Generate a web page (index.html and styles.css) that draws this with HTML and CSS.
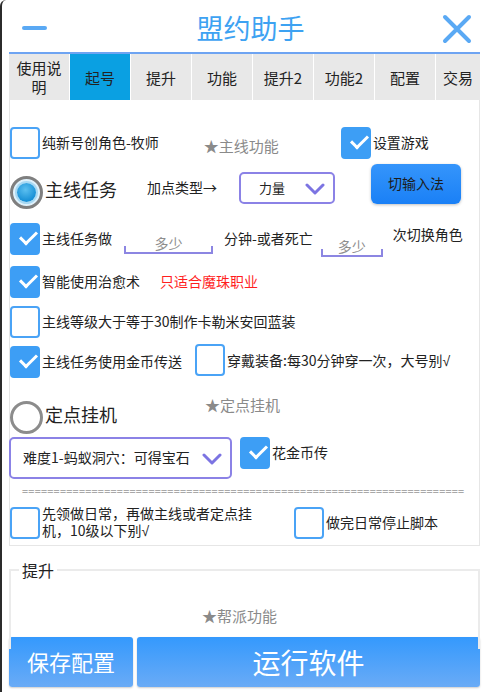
FILE: index.html
```html
<!DOCTYPE html>
<html lang="zh-CN">
<head>
    <meta charset="UTF-8">
    <meta name="viewport" content="width=device-width, initial-scale=1.0">
    <title>盟约助手</title>
    <link rel="stylesheet" href="styles.css">
</head>
<body>

    <div class="app">

        <!-- 标题栏 -->
        <div class="titlebar">
            <span class="btn-min"></span>
            <div class="title">盟约助手</div>
            <svg class="btn-close" width="30" height="30" viewBox="0 0 30 30">
                <path d="M3 3 L27 27 M27 3 L3 27" stroke="#5aa9f4" stroke-width="4" stroke-linecap="round"/>
            </svg>
        </div>

        <!-- 选项卡 -->
        <div class="tabs">
            <div class="tab">使用说<br>明</div>
            <div class="tab active">起号</div>
            <div class="tab">提升</div>
            <div class="tab">功能</div>
            <div class="tab">提升2</div>
            <div class="tab">功能2</div>
            <div class="tab">配置</div>
            <div class="tab last">交易</div>
        </div>

        <div class="panel">

            <div class="row r1">
                <span class="cb"></span>
                <span class="lbl">纯新号创角色-牧师</span>
                <span class="star s1">★主线功能</span>
                <span class="cb on cb-game"></span>
                <span class="lbl">设置游戏</span>
            </div>

            <div class="row r2">
                <span class="radio on"></span>
                <span class="big">主线任务</span>
                <span class="lbl point">加点类型→</span>
                <div class="select sel-small">
                    <span>力量</span>
                    <svg class="chev" width="20" height="12" viewBox="0 0 20 12"><path d="M2 2 L10 10 L18 2" fill="none" stroke="#7c74e2" stroke-width="3" stroke-linecap="round" stroke-linejoin="round"/></svg>
                </div>
                <div class="btn-ime">切输入法</div>
            </div>

            <div class="row r3">
                <span class="cb on"></span>
                <span class="lbl">主线任务做</span>
                <span class="field f1">多少</span>
                <span class="lbl">分钟-或者死亡</span>
                <span class="field f2">多少</span>
                <span class="lbl switch">次切换角色</span>
            </div>

            <div class="row r4">
                <span class="cb on"></span>
                <span class="lbl">智能使用治愈术</span>
                <span class="warn">只适合魔珠职业</span>
            </div>

            <div class="row r5">
                <span class="cb"></span>
                <span class="lbl">主线等级大于等于30制作卡勒米安回蓝装</span>
            </div>

            <div class="row r6">
                <span class="cb on"></span>
                <span class="lbl">主线任务使用金币传送</span>
                <span class="cb cb-wear"></span>
                <span class="lbl">穿戴装备:每30分钟穿一次，大号别<span class="tick">√</span></span>
            </div>

            <div class="row r7">
                <span class="radio"></span>
                <span class="big">定点挂机</span>
                <span class="star s2">★定点挂机</span>
            </div>

            <div class="row r8">
                <div class="select sel-wide">
                    <span>难度1-蚂蚁洞穴：可得宝石</span>
                    <svg class="chev" width="20" height="12" viewBox="0 0 20 12"><path d="M2 2 L10 10 L18 2" fill="none" stroke="#7c74e2" stroke-width="3" stroke-linecap="round" stroke-linejoin="round"/></svg>
                </div>
                <span class="cb on"></span>
                <span class="lbl">花金币传</span>
            </div>

            <div class="sep">======================================================================</div>

            <div class="row r9">
                <span class="cb"></span>
                <span class="lbl two">先领做日常，再做主线或者定点挂机，10级以下别<span class="tick">√</span></span>
                <span class="cb cb-stop"></span>
                <span class="lbl">做完日常停止脚本</span>
            </div>

        </div>

        <!-- 提升分组 -->
        <div class="group">
            <span class="legend">提升</span>
            <div class="star s3">★帮派功能</div>
        </div>

        <!-- 底部按钮 -->
        <div class="bottom">
            <div class="btn-save">保存配置</div>
            <div class="btn-run">运行软件</div>
        </div>

    </div>

</body>
</html>
```

FILE: styles.css
```css
body {
    margin: 0;
    padding: 0;
    background: #fff;
    font-family: "Noto Sans CJK SC", "Noto Sans", sans-serif;
    line-height: 1.25;
    color: #222;
}
.app {
    width: 483px;
    height: 692px;
    overflow: hidden;
    border-left: 2px solid #2b2b2b;
    border-top-left-radius: 6px;
    padding: 0 3px 0 7px;
    box-sizing: border-box;
    position: relative;
}

/* 标题栏 */
.titlebar {
    height: 52px;
    display: flex;
    align-items: center;
    position: relative;
}
.btn-min {
    width: 25px;
    height: 4px;
    background: #5aa9f4;
    border-radius: 2px;
    margin-left: 13px;
    margin-top: 4px;
}
.title {
    flex: 1;
    text-align: center;
    font-size: 27px;
    color: #3da2f2;
    margin-left: 12px;
    margin-top: 4px;
}
.btn-close {
    margin-right: 8px;
    margin-top: 5px;
}

/* 选项卡 */
.tabs {
    display: flex;
    gap: 1px;
    border-top: 2px solid #6ea4f2;
    height: 46px;
}
.tab {
    width: 60px;
    background: #e8e8e8;
    font-size: 15px;
    line-height: 19px;
    display: flex;
    align-items: center;
    justify-content: center;
    text-align: center;
    color: #222;
}
.tab.active {
    background: #0aa0e2;
}
.tab.last {
    flex: 1;
}

/* 主面板 */
.panel {
    display: flow-root;
    height: 446px;
    border: 1px solid #e6e6e6;
    border-top: none;
    box-sizing: border-box;
}
.row {
    display: flex;
    align-items: center;
}
.lbl {
    font-size: 14px;
    margin-left: 2px;
    white-space: nowrap;
}
.tick {
    font-family: "Liberation Sans", sans-serif;
}
.cb {
    width: 30px;
    height: 32px;
    box-sizing: border-box;
    border: 2px solid #4aa3f6;
    border-radius: 4px;
    background: #fff;
    flex: none;
    position: relative;
}
.cb.on {
    background: #3d9ef5;
    border-color: #3d9ef5;
}
.cb.on::after {
    content: "";
    position: absolute;
    left: 8px;
    top: 6px;
    width: 14px;
    height: 7px;
    border-left: 3px solid #fff;
    border-bottom: 3px solid #fff;
    transform: rotate(-45deg);
}
.star {
    color: #8a8a8a;
    font-size: 15px;
}
.radio {
    width: 33px;
    height: 33px;
    box-sizing: border-box;
    border: 3px solid #8c8c8c;
    border-radius: 50%;
    flex: none;
    display: flex;
    align-items: center;
    justify-content: center;
}
.radio.on {
    border-color: #7f7f7f;
    background: #dff1fb;
}
.radio.on::after {
    content: "";
    width: 19px;
    height: 19px;
    border-radius: 50%;
    background: radial-gradient(circle at 45% 35%, #5cc0f0, #1890d6 70%);
    box-shadow: 0 0 0 2px #a8d9f3;
}
.big {
    font-size: 18px;
    margin-left: 2px;
}

.r1 {
    margin-top: 26px;
    height: 34px;
}
.s1 {
    margin-left: 45px;
    margin-top: 6px;
}
.cb-game {
    margin-left: 62px;
}
.r2 {
    margin-top: 4px;
    height: 46px;
    align-items: flex-start;
}
.r2 .radio {
    margin-top: 12px;
}
.r2 .big {
    margin-top: 14px;
}
.point {
    margin-left: 30px;
    margin-top: 15px;
}
.select {
    box-sizing: border-box;
    border: 2px solid #8b82e6;
    border-radius: 5px;
    display: flex;
    align-items: center;
    font-size: 13px;
    position: relative;
    background: #fff;
}
.sel-small {
    width: 96px;
    height: 32px;
    margin-left: 22px;
    margin-top: 8px;
    padding-left: 18px;
}
.chev {
    position: absolute;
    right: 8px;
    top: 50%;
    margin-top: -5px;
}
.btn-ime {
    width: 90px;
    height: 40px;
    margin-left: 36px;
    border-radius: 6px;
    background: linear-gradient(#3595fb, #1a80f6);
    box-shadow: 0 1px 3px rgba(0, 0, 0, 0.25);
    display: flex;
    align-items: center;
    justify-content: center;
    font-size: 14px;
    color: #1c1c1c;
}
.r3 {
    margin-top: 12px;
    height: 33px;
}
.field {
    position: relative;
    color: #8e8e8e;
    font-size: 14px;
    text-align: center;
    border-bottom: 2px solid #8c86e2;
    line-height: 18px;
}
.field::before,
.field::after {
    content: "";
    position: absolute;
    bottom: 0;
    width: 2px;
    height: 6px;
    background: #8c86e2;
}
.field::before {
    left: 0;
}
.field::after {
    right: 0;
}
.f1 {
    width: 89px;
    margin-left: 12px;
    margin-right: 9px;
    margin-top: 10px;
}
.f2 {
    width: 62px;
    margin-left: 8px;
    margin-right: 8px;
    margin-top: 16px;
}
.switch {
    margin-top: -7px;
}
.r4 {
    margin-top: 10px;
    height: 33px;
}
.warn {
    color: #ff1f1f;
    font-size: 14px;
    margin-left: 20px;
}
.r5 {
    margin-top: 7px;
    height: 33px;
}
.r6 {
    margin-top: 7px;
    height: 33px;
}
.cb-wear {
    margin-left: 13px;
    margin-top: -4px;
}
.r7 {
    margin-top: 18px;
    height: 38px;
    align-items: flex-start;
}
.r7 .radio {
    margin-top: 5px;
}
.r7 .big {
    margin-top: 7px;
}
.s2 {
    margin-left: 88px;
}
.r8 {
    margin-top: 3px;
    height: 42px;
    align-items: flex-start;
}
.sel-wide {
    width: 223px;
    height: 42px;
    margin-left: -1px;
    padding-left: 12px;
    font-size: 14px;
}
.r8 .cb {
    margin-left: 8px;
}
.r8 .lbl {
    margin-top: 7px;
}
.sep {
    margin: 7px 0 0 12px;
    white-space: nowrap;
    font-family: "DejaVu Sans Mono", monospace;
    font-size: 10px;
    letter-spacing: 0.3px;
    color: #a8a8a8;
    line-height: 12px;
}
.r9 {
    margin-top: 8px;
    height: 33px;
}
.two {
    white-space: normal;
    width: 212px;
    line-height: 17px;
}
.cb-stop {
    margin-left: 40px;
}

/* 提升分组 */
.group {
    margin-top: 23px;
    height: 80px;
    border: 2px solid #ebebeb;
    border-bottom: none;
    box-sizing: border-box;
    position: relative;
}
.legend {
    position: absolute;
    left: 8px;
    top: -11px;
    background: #fff;
    padding: 0 3px;
    font-size: 16px;
    line-height: 20px;
    color: #222;
}
.s3 {
    text-align: center;
    margin-top: 36px;
    margin-left: -10px;
}

/* 底部按钮 */
.bottom {
    display: flex;
    gap: 4px;
    margin-top: -12px;
    height: 50px;
}
.btn-save,
.btn-run {
    background: linear-gradient(#3499fd, #6aabf6);
    color: #fff;
    border-radius: 3px;
    display: flex;
    align-items: center;
    justify-content: center;
    box-shadow: 0 1px 2px rgba(0, 0, 0, 0.2);
}
.btn-save {
    width: 124px;
    font-size: 22px;
}
.btn-run {
    flex: 1;
    font-size: 28px;
}
```
